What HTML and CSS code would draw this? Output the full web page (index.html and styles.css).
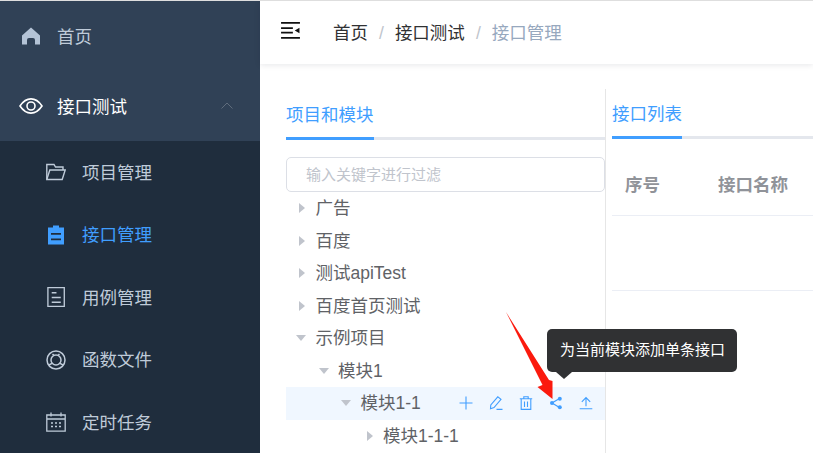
FILE: index.html
```html
<!DOCTYPE html>
<html lang="zh-CN">
<head>
<meta charset="utf-8">
<title>接口管理</title>
<link rel="stylesheet" href="styles.css">
</head>
<body>
<div class="app">
  <aside class="sidebar">
    <div class="menu-item">
      <svg class="ico-home" viewBox="0 0 18 18"><path d="M9 0.5 L18 8.6 V17.5 H13 V13 A2 2 0 0 0 11 11 H7 A2 2 0 0 0 5 13 V17.5 H0 V8.6 Z" fill="#b4c3d6"/></svg>
      <span>首页</span>
    </div>
    <div class="menu-item open">
      <svg class="ico-eye" viewBox="0 0 24 16" fill="none" stroke="#fff" stroke-width="1.6"><path d="M1 8 C5 2 8.5 .9 12 .9 S19 2 23 8 C19 14 15.5 15.1 12 15.1 S5 14 1 8 Z"/><circle cx="12" cy="8" r="4"/></svg>
      <span>接口测试</span>
      <svg class="chev" viewBox="0 0 12 7" fill="none" stroke="#5f6c7c" stroke-width="1"><path d="M.5 6.5 L6 1 L11.5 6.5"/></svg>
    </div>
    <div class="submenu">
      <div class="sub-item">
        <svg class="ico" viewBox="0 0 20 20" fill="none" stroke="#bfcbd9" stroke-width="1.4"><path d="M.8 17.5 V2.5 H8 L9.5 5 H17 V8"/><path d="M.8 17.5 H16.2 L19.2 8 H3.8 L.8 17.5 Z"/></svg>
        <span>项目管理</span>
      </div>
      <div class="sub-item active">
        <svg class="ico" viewBox="0 0 20 20"><path fill-rule="evenodd" d="M2 2.5 H7 V.5 H13 V2.5 H18 V19.5 H2 Z M5 8 V9.8 H15 V8 Z M5 13.5 V15.3 H15 V13.5 Z" fill="#409eff"/></svg>
        <span>接口管理</span>
      </div>
      <div class="sub-item">
        <svg class="ico" viewBox="0 0 20 21" fill="none" stroke="#bfcbd9" stroke-width="1.4"><path d="M1.5 .7 H18.7 V20.3 H1.5 Z"/><path d="M5.5 6 H10.5 M5.5 11 H15 M5.5 16 H15"/></svg>
        <span>用例管理</span>
      </div>
      <div class="sub-item">
        <svg class="ico" viewBox="0 0 20 20" fill="none" stroke="#bfcbd9" stroke-width="1.5"><circle cx="10" cy="10" r="9"/><circle cx="10" cy="10" r="5"/><path d="M3 15 L6.4 13.2 M17 15 L13.6 13.2 M6.5 4 L8 5.4 M13.5 4 L12 5.4"/></svg>
        <span>函数文件</span>
      </div>
      <div class="sub-item">
        <svg class="ico" viewBox="0 0 20 20" fill="none" stroke="#bfcbd9" stroke-width="1.3"><path d="M.8 3 H19.2 V19.2 H.8 Z M.8 7 H19.2 M5 .5 V4.5 M15 .5 V4.5"/><path d="M5 11 H7 M9 11 H11 M13 11 H15 M5 14.5 H7 M9 14.5 H11 M13 14.5 H15" stroke-width="1.5"/></svg>
        <span>定时任务</span>
      </div>
    </div>
  </aside>

  <main class="main">
    <header class="navbar">
      <svg class="hamburger" viewBox="0 0 20 18"><path d="M0 0 H20 V1.8 H0 Z M0 5.6 H12.5 V7.4 H0 Z M0 10.4 H12.5 V12.2 H0 Z M0 16 H20 V17.8 H0 Z M19.5 6 V12 L14.5 9 Z" fill="#111"/></svg>
      <nav class="crumbs">
        <span>首页</span><i>/</i><span>接口测试</span><i>/</i><span class="current">接口管理</span>
      </nav>
    </header>

    <section class="content">
      <div class="pane-left">
        <div class="tabs"><span class="tab">项目和模块</span></div>
        <div class="filter">输入关键字进行过滤</div>
        <div class="tree">
          <div class="row l0"><b class="tri right"></b><span>广告</span></div>
          <div class="row l0"><b class="tri right"></b><span>百度</span></div>
          <div class="row l0"><b class="tri right"></b><span>测试apiTest</span></div>
          <div class="row l0"><b class="tri right"></b><span>百度首页测试</span></div>
          <div class="row l0"><b class="tri down"></b><span>示例项目</span></div>
          <div class="row l1"><b class="tri down"></b><span>模块1</span></div>
          <div class="row l2 hover"><b class="tri down"></b><span>模块1-1</span>
            <div class="actions">
              <svg viewBox="0 0 14 14" fill="none" stroke="#409eff" stroke-width="1.1"><path d="M7 .5 V13.5 M.5 7 H13.5"/></svg>
              <svg viewBox="0 0 14 14" fill="none" stroke="#409eff" stroke-width="1.1"><path d="M1.5 12.8 L1.8 9 L8.8 .8 L12 3.4 L5 11.6 Z M7.5 13.4 H13.5"/></svg>
              <svg viewBox="0 0 14 14" fill="none" stroke="#409eff" stroke-width="1.1"><path d="M.8 2.8 H13.2 M4.8 2.8 V.7 H9.2 V2.8 M2.2 2.8 V13.4 H11.8 V2.8 M5.5 5.5 V11 M8.5 5.5 V11"/></svg>
              <svg viewBox="0 0 14 14"><path d="M10.5 2.5 L3 7 L10.5 11.5" fill="none" stroke="#409eff" stroke-width="1.2"/><circle cx="10.8" cy="2.7" r="2" fill="#409eff"/><circle cx="3" cy="7" r="2" fill="#409eff"/><circle cx="10.8" cy="11.3" r="2" fill="#409eff"/></svg>
              <svg viewBox="0 0 14 14" fill="none" stroke="#409eff" stroke-width="1.1"><path d="M.7 12.8 H13.3 M7 10.2 V1.5 M2.8 5.8 L7 1.5 L11.2 5.8"/></svg>
            </div>
          </div>
          <div class="row l3"><b class="tri right"></b><span>模块1-1-1</span></div>
        </div>
      </div>

      <div class="pane-right">
        <div class="tabs"><span class="tab">接口列表</span></div>
        <div class="thead"><span class="col-no">序号</span><span class="col-name">接口名称</span></div>
        <div class="tbody"></div>
      </div>
    </section>
  </main>

  <svg class="red-arrow" viewBox="0 0 60 100"><polygon points="1,2 44,70 47.5,71 47.5,89 32.5,77 37.5,75" fill="#fb1a0e"/></svg>
  <div class="tooltip">为当前模块添加单条接口</div>
</div>
</body>
</html>
```

FILE: styles.css
```css
* { box-sizing: border-box; }

html, body {
  margin: 0;
  height: 100%;
  overflow: hidden;
  background: #fff;
}

.app {
  position: relative;
  display: flex;
  width: 813px;
  height: 453px;
  overflow: hidden;
  border-top: 1px solid #dedede;
  font-family: "Liberation Sans", "Noto Sans CJK SC", sans-serif;
  font-size: 17.5px;
}

/* sidebar */
.sidebar {
  flex: 0 0 260px;
  background: #304156;
  color: #bfcbd9;
}

.menu-item {
  position: relative;
  display: flex;
  align-items: center;
  height: 70px;
  padding-left: 22px;
}

.menu-item span { margin-left: 17px; margin-bottom: 2px; }

.menu-item.open { padding-left: 19px; color: #fff; }
.menu-item.open span { margin-left: 14px; }

.ico-home { width: 18px; height: 18px; }
.ico-eye { width: 24px; height: 16px; }

.chev {
  position: absolute;
  top: 31px;
  left: 221px;
  width: 12px;
  height: 7px;
}

.submenu { background: #1f2d3d; }

.sub-item {
  display: flex;
  align-items: center;
  height: 62.5px;
  padding-left: 46px;
}

.sub-item span { margin-bottom: 2px; }

.sub-item.active { color: #409eff; }

.ico { width: 20px; height: 20px; margin-right: 16px; }

/* navbar */
.main {
  flex: 1;
  min-width: 0;
  display: flex;
  flex-direction: column;
}

.navbar {
  display: flex;
  align-items: center;
  flex: 0 0 63px;
  padding-left: 21px;
  box-shadow: 0 1px 6px rgba(0, 21, 41, .1);
}

.hamburger { width: 19px; height: 17px; margin: 0 33px 5px 0; }

.crumbs { color: #303133; white-space: nowrap; margin-bottom: 2px; }
.crumbs i {
  font-style: normal;
  font-weight: 400;
  color: #c0c4cc;
  margin: 0 11px;
}
.crumbs .current { color: #97a8be; }

/* panes */
.content {
  flex: 1;
  display: flex;
  padding: 25px 0 0 26px;
  min-height: 0;
}

.pane-left {
  flex: 0 0 320px;
  border-right: 1px solid #e6e6e6;
}

.pane-right {
  flex: 1;
  min-width: 0;
  padding-left: 6px;
}

.tabs {
  display: flex;
  height: 50px;
  border-bottom: 3px solid #e4e7ed;
  padding-top: 15px;
}

.pane-left .tabs { height: 51px; padding-top: 16px; }

.tab {
  height: 35px;
  color: #409eff;
  border-bottom: 3px solid #409eff;
  line-height: 20px;
  white-space: nowrap;
}

/* filter */
.filter {
  height: 35px;
  margin-top: 17px;
  width: 319px;
  padding-left: 19px;
  border: 1px solid #dcdfe6;
  border-radius: 5px;
  color: #c0c4cc;
  font-size: 15px;
  line-height: 33px;
}

/* tree */
.tree { color: #606266; }

.row {
  display: flex;
  align-items: center;
  height: 32.5px;
  width: 319px;
  white-space: nowrap;
}

.row > span { margin-bottom: 3px; }

.l0 { padding-left: 0; }
.l1 { padding-left: 22.5px; }
.l2 { padding-left: 45px; }
.l3 { padding-left: 67.5px; }

.hover { background: #f0f7ff; }

.tri {
  flex: 0 0 29.5px;
  height: 0;
  position: relative;
}

.tri::before {
  content: "";
  position: absolute;
  border-style: solid;
  border-color: transparent;
}

.tri.right::before {
  top: -5px;
  left: 13px;
  border-width: 5px 0 5px 6.5px;
  border-left-color: #c0c4cc;
}

.tri.down::before {
  top: -3px;
  left: 10px;
  border-width: 6.5px 5px 0 5px;
  border-top-color: #c0c4cc;
}

.actions {
  display: flex;
  align-items: center;
  gap: 16px;
  margin-left: auto;
  padding-right: 12px;
}

.actions svg { width: 14px; height: 14px; display: block; }

/* table */
.thead {
  display: flex;
  align-items: center;
  height: 77px;
  padding-top: 12px;
  border-bottom: 1px solid #ebeef5;
  color: #909399;
  font-weight: 700;
  white-space: nowrap;
}

.col-no { margin-left: 13px; width: 93px; }

.tbody {
  height: 75px;
  border-bottom: 1px solid #ebeef5;
}

/* overlays */
.tooltip {
  position: absolute;
  left: 547px;
  top: 328px;
  width: 190px;
  height: 43px;
  padding-left: 13px;
  border-radius: 5px;
  background: #303133;
  color: #fff;
  font-size: 15px;
  line-height: 42px;
  white-space: nowrap;
}

.tooltip::after {
  content: "";
  position: absolute;
  left: 9px;
  top: 43px;
  border-style: solid;
  border-width: 7px 8px 0 8px;
  border-color: #303133 transparent transparent;
}

.red-arrow {
  position: absolute;
  left: 505px;
  top: 309px;
  width: 60px;
  height: 100px;
  z-index: 2;
}
```
